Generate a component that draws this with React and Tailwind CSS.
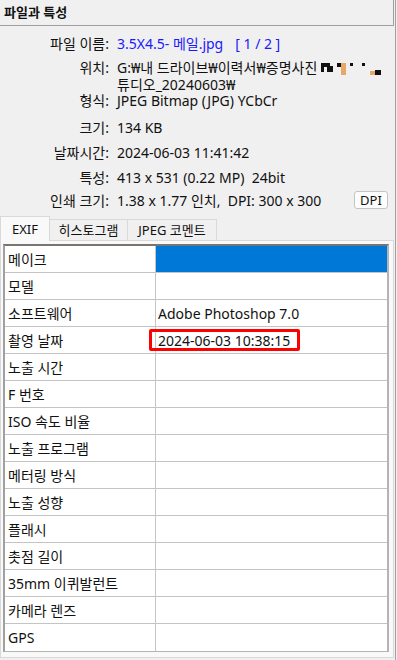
import React from "react";

const font = { fontFamily: '"Noto Sans", "Noto Sans CJK KR", sans-serif' };

function Garbled() {
  return (
    <svg width="62" height="14" viewBox="0 0 62 14" className="inline-block align-middle ml-[3px] -mt-[3px]">
      <rect x="1" y="2" width="9" height="4" fill="#111" />
      <rect x="1" y="2" width="3" height="9" fill="#111" />
      <rect x="7" y="5" width="6" height="6" fill="#111" />
      <rect x="17" y="2" width="4" height="4" fill="#111" />
      <rect x="21" y="2" width="5" height="12" fill="#e8a868" />
      <rect x="30" y="2" width="3" height="3" fill="#111" />
      <rect x="42" y="2" width="3" height="3" fill="#111" />
      <rect x="50" y="10" width="5" height="4" fill="#e8a868" />
      <rect x="55" y="9" width="6" height="5" fill="#111" />
    </svg>
  );
}

function InfoRow({ label, children, className = "" }) {
  return (
    <div className={"flex items-start " + className}>
      <div className="w-[110px] text-right pr-[1px] whitespace-nowrap">{label}:</div>
      <div className="ml-[7px] flex-1 whitespace-nowrap">{children}</div>
    </div>
  );
}

const rows = [
  "메이크",
  "모델",
  "소프트웨어",
  "촬영 날짜",
  "노출 시간",
  "F 번호",
  "ISO 속도 비율",
  "노출 프로그램",
  "메터링 방식",
  "노출 성향",
  "플래시",
  "촛점 길이",
  "35mm 이퀴발런트",
  "카메라 렌즈",
  "GPS",
];

export default function App() {
  return (
    <div
      className="w-[397px] h-[660px] bg-[#f0f0f0] overflow-hidden text-[14px] leading-[17px] text-[#111]"
      style={font}
    >
      <div className="w-[396px] h-[660px] border-r border-[#a0a0a0]">
        {/* header */}
        <div className="w-[394px] h-[26px] border-r border-b border-[#a0a0a0] flex items-center pl-[4px] font-bold text-[13px]">
          파일과 특성
        </div>

        {/* info */}
        <div className="pt-[9px]">
          <InfoRow label="파일 이름">
            <span className="text-[#1a1aff]">
              3.5X4.5- 메일.jpg<span className="ml-[12px]">[ 1 / 2 ]</span>
            </span>
          </InfoRow>
          <InfoRow label="위치" className="mt-[7px]">
            <div>
              G:₩내 드라이브₩이력서₩증명사진
              <Garbled />
            </div>
            <div>튜디오_20240603₩</div>
          </InfoRow>
          <InfoRow label="형식" className="-mt-[1px]">
            JPEG Bitmap (JPG) YCbCr
          </InfoRow>
          <InfoRow label="크기" className="mt-[10px]">
            134 KB
          </InfoRow>
          <InfoRow label="날짜시간" className="mt-[8px]">
            2024-06-03 11:41:42
          </InfoRow>
          <InfoRow label="특성" className="mt-[8px]">
            413 x 531 (0.22 MP)&nbsp; 24bit
          </InfoRow>
          <div className="flex items-center mt-[5px]">
            <div className="w-[110px] text-right pr-[1px]">인쇄 크기:</div>
            <div className="ml-[7px] flex-1 whitespace-nowrap">1.38 x 1.77 인치,&nbsp; DPI: 300 x 300</div>
            <div className="w-[34px] h-[18px] mr-[7px] bg-[#fdfdfd] border border-[#c4c4c4] rounded-[3px] flex items-center justify-center text-[13px]">
              DPI
            </div>
          </div>
        </div>

        {/* tabs */}
        <div className="mt-[8px] flex items-end h-[24px] relative z-10 text-[13px]">
          <div className="w-[50px] h-[25px] bg-[#f9f9f9] border border-b-0 border-[#d9d9d9] flex items-center justify-center">
            EXIF
          </div>
          <div className="w-[78px] h-[22px] border-t border-r border-[#d9d9d9] flex items-center justify-center">
            히스토그램
          </div>
          <div className="w-[89px] h-[22px] border-t border-r border-[#d9d9d9] flex items-center justify-center">
            JPEG 코멘트
          </div>
        </div>

        {/* panel */}
        <div className="w-[394px] h-[418px] -mt-[1px] bg-[#f9f9f9] border border-[#d9d9d9] pt-[3px] pl-[2px]">
          <div className="w-[386px] border-t-2 border-l-2 border-r-2 border-b border-t-[#7a7470] border-l-[#a0a0a0] border-r-[#b4b4b4] border-b-[#b4b4b4] bg-white">
            {rows.map((r, i) => (
              <div
                key={r}
                className={
                  "flex h-[27px] " + (i < rows.length - 1 ? "border-b border-[#c4c4c4]" : "")
                }
              >
                <div className="w-[151px] border-r border-[#c4c4c4] flex items-center pl-[3px] whitespace-nowrap">
                  {r}
                </div>
                <div
                  className={
                    "flex-1 flex items-center pl-[2px] relative " +
                    (i === 0 ? "bg-[#0078d7]" : "")
                  }
                >
                  {i === 2 && "Adobe Photoshop 7.0"}
                  {i === 3 && (
                    <>
                      <span>2024-06-03 10:38:15</span>
                      <div className="absolute left-[-7px] top-[2px] w-[151px] h-[22px] border-[3px] border-[#ff0000] rounded-[2px]" />
                    </>
                  )}
                </div>
              </div>
            ))}
          </div>
        </div>
      </div>
    </div>
  );
}
